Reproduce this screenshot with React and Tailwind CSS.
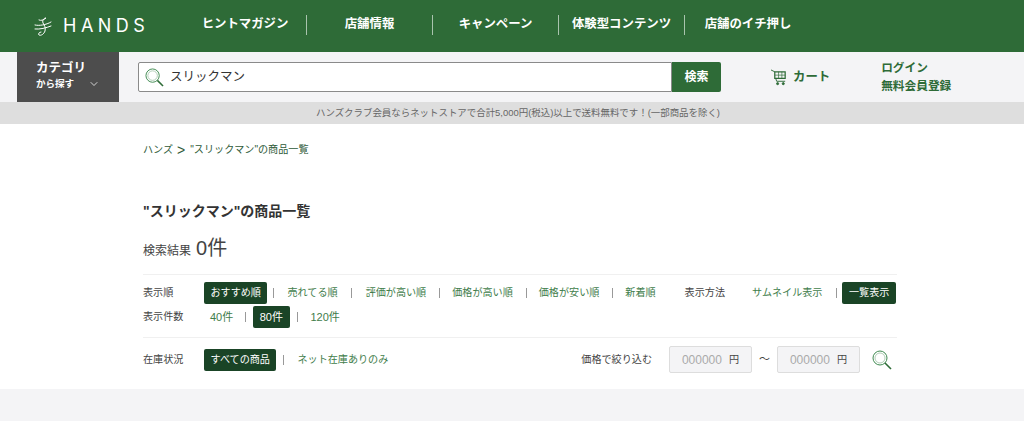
import React from 'react';
import { ChevronDown } from 'lucide-react';

const FONT = "font-['Liberation_Sans','Noto_Sans_CJK_JP',sans-serif]";

function Lens({ className }) {
  return (
    <svg viewBox="0 0 20 20" fill="none" stroke="#3f8a50" className={className}>
      <circle cx="8" cy="8" r="7" strokeWidth="1" />
      <circle cx="8" cy="8" r="5" strokeWidth="0.7" stroke="#8fb898" />
      <path d="M13 13l6 6" strokeWidth="1.6" stroke="#2e6b37" />
    </svg>
  );
}

function Logo() {
  return (
    <svg viewBox="0 0 18 19" fill="none" stroke="white" strokeWidth="1" strokeLinecap="round" strokeLinejoin="round" className="w-[18px] h-[19px]">
      <path d="M5 3c2 1 5 0 7-2-2 0-4 2-3 5 1 2 3 4 2 8-1 3-4 5-6 4-1-1 0-3 2-3" />
      <path d="M1 8c4 1 11 0 16-3" />
      <path d="M1 12c5 .5 11-1 16-3" />
    </svg>
  );
}

function Sep({ className = 'ml-[13px] mr-[12px]' }) {
  return <span className={`w-px h-[10px] bg-[#999] ${className}`} />;
}

function On({ children }) {
  return (
    <span className="inline-flex items-center h-[22px] px-[6.5px] bg-[#1a4426] text-white rounded-[2px]">
      {children}
    </span>
  );
}

function Off({ children }) {
  return <span className="text-[#3f7d4b]">{children}</span>;
}

function PriceBox() {
  return (
    <div className="w-[83px] h-[27px] bg-[#f4f4f6] border border-[#ddd] rounded-[2px] flex items-center justify-center gap-[7px]">
      <span className="text-[#aaa] text-[12px]">000000</span>
      <span>円</span>
    </div>
  );
}

export default function App() {
  const nav = [
    ['ヒントマガジン', 'w-[123px]', true],
    ['店舗情報', 'w-[126px]', true],
    ['キャンペーン', 'w-[126px]', true],
    ['体験型コンテンツ', 'w-[126px]', true],
    ['店舗のイチ押し', 'w-[126px]', false],
  ];

  return (
    <div className={`${FONT} w-[1024px] h-[446px] bg-white text-[#333] overflow-hidden`}>
      <header className="h-[52px] bg-[#2e6b37] flex items-center">
        <div className="w-[184px] pl-[34px] flex items-center gap-[11px] text-white">
          <Logo />
          <span className="text-[18px] tracking-[4.5px] font-['Inter'] leading-none">HANDS</span>
        </div>
        <nav className="flex items-center h-[20px] -mt-[3px]">
          {nav.map(([label, w, line]) => (
            <div key={label} className={`${w} h-full flex items-center justify-center text-white text-[12.4px] font-bold ${line ? 'border-r border-[#a9c4ad]' : ''}`}>
              {label}
            </div>
          ))}
        </nav>
      </header>

      <div className="h-[50px] flex bg-[#f4f4f6]">
        <div className="ml-[17px] w-[102px] h-[50px] bg-[#4d4d4d] text-white pl-[19px] pt-[8px]">
          <div className="text-[12.5px] font-bold leading-[16px]">カテゴリ</div>
          <div className="flex items-center text-[9.5px] font-bold leading-[16px]">
            から探す
            <ChevronDown size={12} strokeWidth={1.5} className="ml-[14px]" />
          </div>
        </div>
        <div className="ml-[19px] mt-[10px] flex h-[30px] w-[583px]">
          <div className="flex-1 flex items-center bg-white border border-[#8a8a8a] rounded-l-[2px] pl-[6px]">
            <Lens className="w-[19px] h-[19px]" />
            <span className="ml-[6px] text-[12.5px]">スリックマン</span>
          </div>
          <div className="w-[49px] bg-[#2e6b37] rounded-r-[2px] text-white text-[12px] font-bold flex items-center justify-center">検索</div>
        </div>
        <div className="ml-[50px] mt-[16px] flex items-center h-[18px] text-[#2e6b37]">
          <svg viewBox="0 0 18 18" fill="none" stroke="#2e6b37" strokeWidth="1" className="w-[17px] h-[17px]">
            <path d="M0 1l4 2" />
            <path d="M4 3h11v7H4z" strokeWidth="1.3" />
            <path d="M4 6.5h11M8 3v7M11.5 3v7" strokeWidth="0.7" />
            <path d="M5 10l1 3h9" />
            <circle cx="7" cy="15.5" r="1.1" fill="#2e6b37" />
            <circle cx="13" cy="15.5" r="1.1" fill="#2e6b37" />
          </svg>
          <span className="ml-[5px] text-[12.4px] font-bold">カート</span>
        </div>
        <div className="ml-[51px] mt-[7px] text-[#2e6b37] text-[11.7px] font-bold leading-[18px]">
          <div>ログイン</div>
          <div>無料会員登録</div>
        </div>
      </div>

      <div className="h-[22px] bg-[#dedede] text-[#666] text-[9.45px] pl-[12px] flex items-center justify-center">
        ハンズクラブ会員ならネットストアで合計5,000円(税込)以上で送料無料です！(一部商品を除く)
      </div>

      <main className="h-[265px] pl-[143px] pt-[19px]">
        <div className="flex items-center text-[10.1px] text-[#2e5a38] h-[14px]">
          <span>ハンズ</span>
          <span className="ml-[4px] mr-[5px] text-[14px] font-light">&gt;</span>
          <span>"スリックマン"の商品一覧</span>
        </div>

        <h1 className="mt-[45px] text-[14px] font-bold leading-[18px]">"スリックマン"の商品一覧</h1>

        <div className="mt-[13px] flex items-baseline h-[24px]">
          <span className="text-[12px] text-[#444]">検索結果</span>
          <span className="ml-[5px] text-[20px] text-[#444]">0件</span>
        </div>

        <div className="mt-[17px] w-[754px] border-t border-[#f0f0f0] pt-[7px] text-[10.1px] text-[#444]">
          <div className="flex items-center h-[22px]">
            <span className="w-[61px]">表示順</span>
            <On>おすすめ順</On>
            <Sep className="ml-[6px] mr-[13px]" />
            <Off>売れてる順</Off>
            <Sep className="ml-[13px] mr-[14px]" />
            <Off>評価が高い順</Off>
            <Sep />
            <Off>価格が高い順</Off>
            <Sep />
            <Off>価格が安い順</Off>
            <Sep />
            <Off>新着順</Off>
            <span className="ml-[29px]">表示方法</span>
            <span className="ml-[27px]"><Off>サムネイル表示</Off></span>
            <Sep className="ml-[14px] mr-[5px]" />
            <On>一覧表示</On>
          </div>
          <div className="flex items-center h-[22px] mt-[2px] text-[11px]">
            <span className="w-[67px] text-[10.1px]">表示件数</span>
            <Off>40件</Off>
            <Sep className="ml-[12px] mr-[7px]" />
            <On>80件</On>
            <Sep className="ml-[7px] mr-[13px]" />
            <Off>120件</Off>
          </div>
        </div>

        <div className="mt-[9px] w-[754px] border-t border-[#f0f0f0] pt-[8px] text-[10.1px] text-[#444] flex items-center">
          <span className="w-[61px]">在庫状況</span>
          <On>すべての商品</On>
          <Sep className="ml-[7px] mr-[13px]" />
          <Off>ネット在庫ありのみ</Off>
          <span className="ml-auto">価格で絞り込む</span>
          <div className="ml-[17px]"><PriceBox /></div>
          <span className="mx-[7px] text-[11px]">〜</span>
          <PriceBox />
          <Lens className="ml-[12px] mr-[5px] w-[20px] h-[20px]" />
        </div>
      </main>

      <div className="h-[32px] bg-[#f4f4f6]" />
    </div>
  );
}
